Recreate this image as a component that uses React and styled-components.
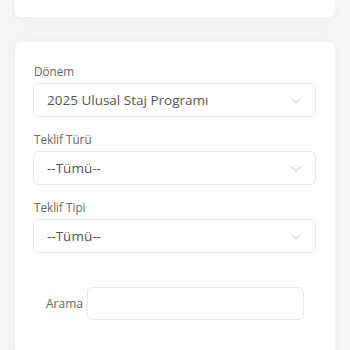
import React from 'react';
import styled, { createGlobalStyle } from 'styled-components';

const GlobalStyle = createGlobalStyle`
    body {
        margin: 0;
        background: #f6f6f6;
        font-family: "Open Sans", "DejaVu Sans", sans-serif;
    }
`;
const Page = styled.div`
    display: flex;
    flex-direction: column;
    gap: 25px;
    padding: 0 15px;
`;
const TopCard = styled.div`
    height: 17px;
    background: #fff;
    border-radius: 0 0 6px 6px;
    box-shadow: 0 4px 14px rgba(0, 0, 0, 0.04);
`;
const FilterCard = styled.div`
    background: #fff;
    border-radius: 6px 6px 0 0;
    box-shadow: 0 0 14px rgba(0, 0, 0, 0.04);
    padding: 21px 19px 40px 18px;
    display: flex;
    flex-direction: column;
    gap: 14px;
`;
const Field = styled.div`
    display: flex;
    flex-direction: column;
    gap: 4px;
`;
const Label = styled.label`
    font-size: 11.7px;
    line-height: 16px;
    color: #666;
    padding-left: 1px;
`;
const SelectBox = styled.div`
    height: 34px;
    box-sizing: border-box;
    border: 1px solid #e9e9e9;
    border-radius: 5px;
    display: flex;
    align-items: center;
    justify-content: space-between;
    padding: 0 14px 0 13px;
    font-size: 13.5px;
    color: #555;
`;
const Chevron = styled.svg`
    width: 10px;
    height: 6px;
    margin-top: 2px;
`;
const SearchRow = styled.div`
    display: flex;
    align-items: center;
    gap: 4px;
    margin-top: 20px;
    padding: 0 12px 0 13px;
`;
const SearchLabel = styled.label`
    font-size: 12px;
    color: #666;
`;
const SearchInput = styled.input`
    flex: 1;
    height: 33px;
    box-sizing: border-box;
    border: 1px solid #e9e9e9;
    border-radius: 5px;
    outline: none;
    background: #fff;
`;

function Select({ label, value }) {
    return (
        <Field>
            <Label>{label}</Label>
            <SelectBox>
                <span>{value}</span>
                <Chevron viewBox="0 0 10 6">
                    <path d="M1 1l4 4 4-4" fill="none" stroke="#d4d4d4" strokeWidth="1.1" />
                </Chevron>
            </SelectBox>
        </Field>
    );
}

export default function App() {
    return (
        <>
            <GlobalStyle />
            <Page>
                <TopCard />
                <FilterCard>
                    <Select label="Dönem" value="2025 Ulusal Staj Programı" />
                    <Select label="Teklif Türü" value="--Tümü--" />
                    <Select label="Teklif Tipi" value="--Tümü--" />
                    <SearchRow>
                        <SearchLabel>Arama</SearchLabel>
                        <SearchInput />
                    </SearchRow>
                </FilterCard>
            </Page>
        </>
    );
}
